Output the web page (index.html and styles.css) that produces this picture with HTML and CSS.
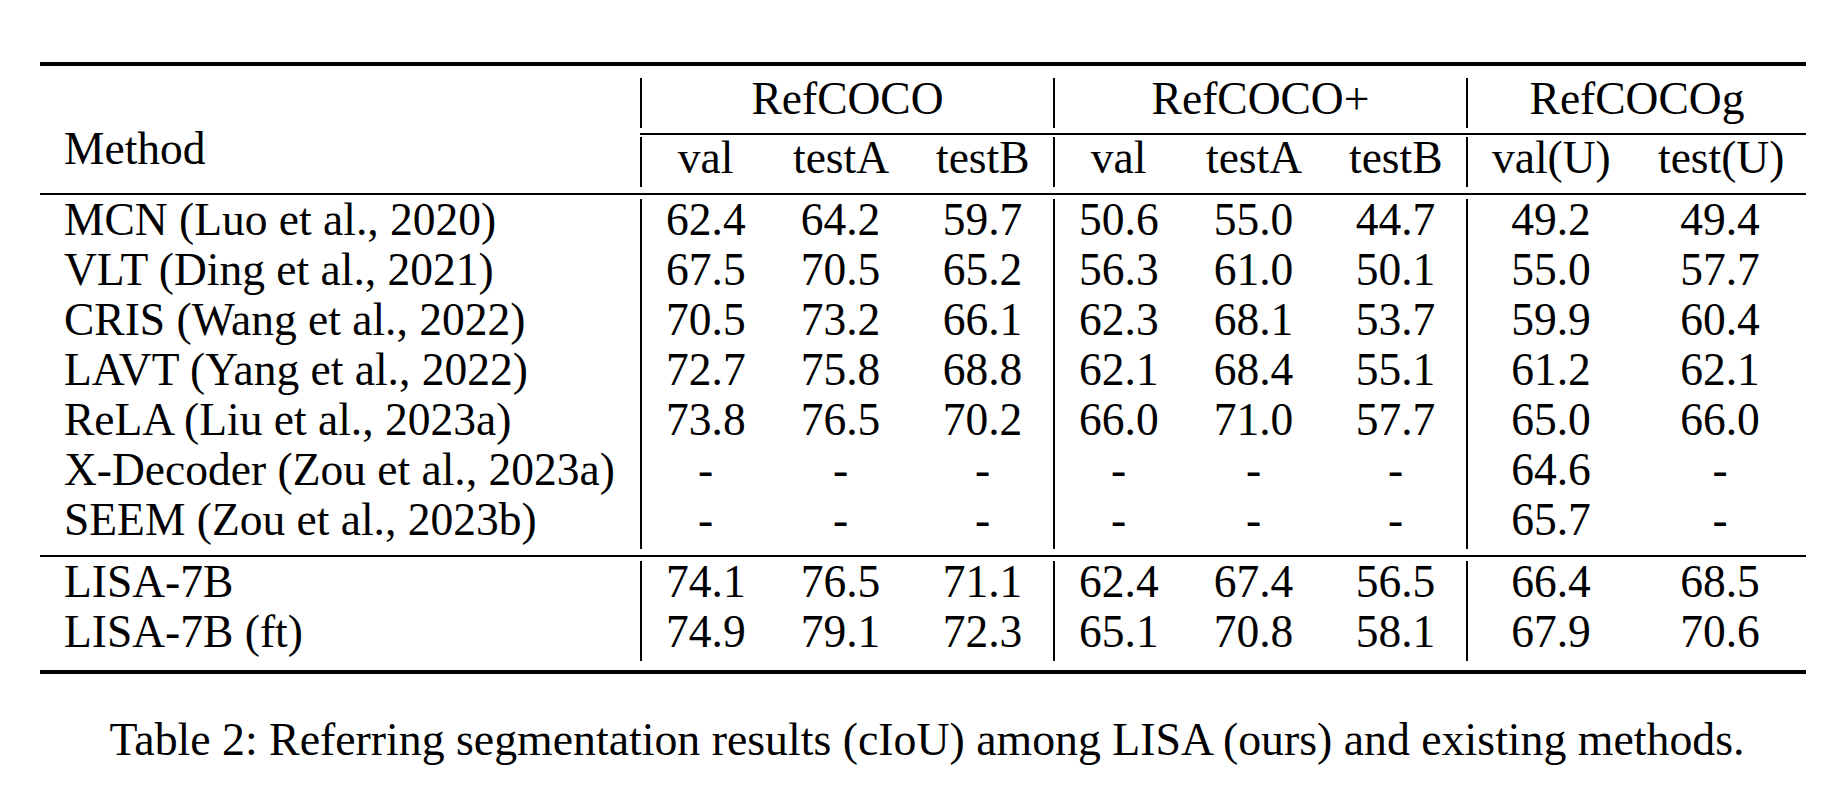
FILE: index.html
```html
<!DOCTYPE html>
<html lang="en">
<head>
<meta charset="utf-8">
<title>Table 2: Referring segmentation results</title>
<link rel="stylesheet" href="styles.css">
</head>
<body>
<figure class="figure">
  <table class="results">
    <colgroup>
      <col class="c-method">
      <col class="c-val"><col class="c-testa"><col class="c-testb">
      <col class="c-val"><col class="c-testa"><col class="c-testb">
      <col class="c-valu"><col class="c-testu">
    </colgroup>
    <thead>
      <tr class="rule heavy"><td colspan="9"></td></tr>
      <tr class="spacer sp-12"><td colspan="9"></td></tr>
      <tr>
        <th class="name method" rowspan="5">Method</th>
        <th class="bar" colspan="3">RefCOCO</th>
        <th class="bar" colspan="3">RefCOCO+</th>
        <th class="bar" colspan="2">RefCOCOg</th>
      </tr>
      <tr class="spacer sp-5"><td colspan="8"></td></tr>
      <tr class="rule light"><td colspan="8"></td></tr>
      <tr class="spacer sp-2"><td colspan="8"></td></tr>
      <tr>
        <th class="bar">val</th><th>testA</th><th>testB</th>
        <th class="bar">val</th><th>testA</th><th>testB</th>
        <th class="bar">val(U)</th><th>test(U)</th>
      </tr>
      <tr class="spacer sp-6"><td colspan="9"></td></tr>
      <tr class="rule light"><td colspan="9"></td></tr>
      <tr class="spacer sp-4"><td colspan="9"></td></tr>
    </thead>
    <tbody>
      <tr><td class="name">MCN (Luo et al., 2020)</td><td class="bar">62.4</td><td>64.2</td><td>59.7</td><td class="bar">50.6</td><td>55.0</td><td>44.7</td><td class="bar">49.2</td><td>49.4</td></tr>
      <tr><td class="name">VLT (Ding et al., 2021)</td><td class="bar">67.5</td><td>70.5</td><td>65.2</td><td class="bar">56.3</td><td>61.0</td><td>50.1</td><td class="bar">55.0</td><td>57.7</td></tr>
      <tr><td class="name">CRIS (Wang et al., 2022)</td><td class="bar">70.5</td><td>73.2</td><td>66.1</td><td class="bar">62.3</td><td>68.1</td><td>53.7</td><td class="bar">59.9</td><td>60.4</td></tr>
      <tr><td class="name">LAVT (Yang et al., 2022)</td><td class="bar">72.7</td><td>75.8</td><td>68.8</td><td class="bar">62.1</td><td>68.4</td><td>55.1</td><td class="bar">61.2</td><td>62.1</td></tr>
      <tr><td class="name">ReLA (Liu et al., 2023a)</td><td class="bar">73.8</td><td>76.5</td><td>70.2</td><td class="bar">66.0</td><td>71.0</td><td>57.7</td><td class="bar">65.0</td><td>66.0</td></tr>
      <tr><td class="name">X-Decoder (Zou et al., 2023a)</td><td class="bar">-</td><td>-</td><td>-</td><td class="bar">-</td><td>-</td><td>-</td><td class="bar">64.6</td><td>-</td></tr>
      <tr><td class="name">SEEM (Zou et al., 2023b)</td><td class="bar">-</td><td>-</td><td>-</td><td class="bar">-</td><td>-</td><td>-</td><td class="bar">65.7</td><td>-</td></tr>
      <tr class="spacer sp-6"><td colspan="9"></td></tr>
      <tr class="rule light"><td colspan="9"></td></tr>
      <tr class="spacer sp-4"><td colspan="9"></td></tr>
      <tr><td class="name">LISA-7B</td><td class="bar">74.1</td><td>76.5</td><td>71.1</td><td class="bar">62.4</td><td>67.4</td><td>56.5</td><td class="bar">66.4</td><td>68.5</td></tr>
      <tr><td class="name">LISA-7B (ft)</td><td class="bar">74.9</td><td>79.1</td><td>72.3</td><td class="bar">65.1</td><td>70.8</td><td>58.1</td><td class="bar">67.9</td><td>70.6</td></tr>
      <tr class="spacer sp-9"><td colspan="9"></td></tr>
      <tr class="rule heavy"><td colspan="9"></td></tr>
    </tbody>
  </table>
  <figcaption class="caption">Table 2: Referring segmentation results (cIoU) among LISA (ours) and existing methods.</figcaption>
</figure>
</body>
</html>
```

FILE: styles.css
```css
html, body {
  margin: 0;
  padding: 0;
  background: #ffffff;
}

body {
  font-family: "Liberation Serif", "Times New Roman", Times, serif;
  color: #000000;
}

.figure {
  margin: 0;
  padding: 62px 0 0 40px;
}

.results {
  border-collapse: separate;
  border-spacing: 0;
  table-layout: fixed;
  width: 1766px;
  font-size: 45.5px;
}

.c-method { width: 600px; }
.c-val { width: 129px; }
.c-testa { width: 143px; }
.c-testb { width: 141px; }
.c-valu { width: 168px; }
.c-testu { width: 172px; }

.results th,
.results td {
  padding: 0 24px 8px;
  line-height: 42px;
  font-weight: normal;
  text-align: center;
  white-space: nowrap;
}

.results .name {
  text-align: left;
}

.results .method {
  vertical-align: bottom;
  padding-bottom: 17px;
}

.results .bar {
  border-left: 2px solid #000000;
}

.results .spacer td,
.results .rule td {
  padding: 0;
  line-height: 0;
  font-size: 0;
}

.results .sp-2 td { height: 2px; }
.results .sp-4 td { height: 4px; }
.results .sp-5 td { height: 5px; }
.results .sp-6 td { height: 6px; }
.results .sp-9 td { height: 9px; }
.results .sp-12 td { height: 12px; }

.results .rule td { background: #000000; }
.results .heavy td { height: 4px; }
.results .light td { height: 2px; }

.caption {
  width: 1766px;
  padding-left: 4px;
  margin-top: 41px;
  font-size: 45.8px;
  line-height: 50px;
  text-align: center;
}
```
